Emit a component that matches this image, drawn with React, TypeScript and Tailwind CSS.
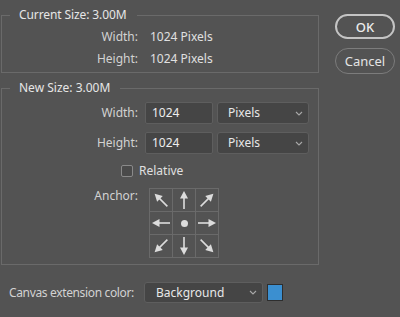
import React from "react"

const Chevron = () => (
    <svg width="8" height="5" viewBox="0 0 8 5" className="shrink-0">
        <path d="M1 1 L4 4 L7 1" fill="none" stroke="#a8a8a8" strokeWidth="1.1" />
    </svg>
)

const Arrow = ({ angle, short }: { angle: number; short?: boolean }) => (
    <svg width="22" height="22" viewBox="0 0 22 22">
        <g transform={`rotate(${angle} 11 11)`} fill="#dcdcdc">
            {short ? (
                <>
                    <polygon points="11,4 7,10.5 15,10.5" />
                    <rect x="10.2" y="9" width="1.6" height="10" />
                </>
            ) : (
                <>
                    <polygon points="11,2 7,9.5 15,9.5" />
                    <rect x="10.2" y="8" width="1.6" height="12" />
                </>
            )}
        </g>
    </svg>
)

const Select = ({ label, width }: { label: string; width: string }) => (
    <div className={`${width} h-[22px] flex items-center justify-between pl-[10px] pr-[5px] bg-[#454545] border border-[#5e5e5e] rounded-[3px] text-[#e8e8e8]`}>
        <span>{label}</span>
        <Chevron />
    </div>
)

export default function App() {
    const cells = [
        <Arrow angle={-45} />,
        <Arrow angle={0} />,
        <Arrow angle={45} />,
        <Arrow angle={-90} />,
        <span className="w-[7px] h-[7px] rounded-full bg-[#dcdcdc]" />,
        <Arrow angle={90} />,
        <Arrow angle={-135} />,
        <Arrow angle={180} />,
        <Arrow angle={135} />,
    ]

    return (
        <div className="w-[400px] h-[317px] bg-[#535353] text-[12px] leading-[16px] text-[#d2d2d2] flex pl-[1px]" style={{ fontFamily: '"Noto Sans", "Open Sans", sans-serif' }}>
            <div className="w-[318px] flex flex-col">
                <fieldset className="mt-[7px] border border-[#6a6a6a] pt-[3px] pb-[2px]">
                    <legend className="ml-[8px] pl-[9px] pr-[10px] text-[#e6e6e6] tracking-[-0.1px]">Current Size: 3.00M</legend>
                    <div className="flex h-[22px] items-center">
                        <span className="w-[136px] text-right">Width:</span>
                        <span className="ml-[12px] text-[#e0e0e0]">1024 Pixels</span>
                    </div>
                    <div className="flex h-[22px] items-center">
                        <span className="w-[136px] text-right">Height:</span>
                        <span className="ml-[12px] text-[#e0e0e0]">1024 Pixels</span>
                    </div>
                </fieldset>

                <fieldset className="mt-[7px] border border-[#6a6a6a] pt-[6px] pb-[6px] flex flex-col">
                    <legend className="ml-[8px] pl-[9px] pr-[10px] text-[#e6e6e6]">New Size: 3.00M</legend>
                    <div className="flex items-center">
                        <span className="w-[136px] text-right">Width:</span>
                        <div className="ml-[7px] w-[68px] h-[22px] flex items-center pl-[6px] bg-[#454545] border border-[#5e5e5e] rounded-[2px] text-[#eeeeee]">1024</div>
                        <div className="ml-[4px]"><Select label="Pixels" width="w-[92px]" /></div>
                    </div>
                    <div className="flex items-center mt-[8px]">
                        <span className="w-[136px] text-right">Height:</span>
                        <div className="ml-[7px] w-[68px] h-[22px] flex items-center pl-[6px] bg-[#454545] border border-[#5e5e5e] rounded-[2px] text-[#eeeeee]">1024</div>
                        <div className="ml-[4px]"><Select label="Pixels" width="w-[92px]" /></div>
                    </div>
                    <div className="flex items-center h-[22px] mt-[6px] pl-[119px]">
                        <span className="w-[12px] h-[12px] border border-[#8a8a8a] rounded-[2px] bg-[#4a4a4a]" />
                        <span className="ml-[6px] text-[#e0e0e0]">Relative</span>
                    </div>
                    <div className="flex items-start mt-[6px]">
                        <span className="w-[136px] text-right">Anchor:</span>
                        <div className="ml-[11px] w-[70px] h-[70px] grid grid-cols-3 gap-[1px] p-[1px] bg-[#6a6a6a]">
                            {cells.map((c, i) => (
                                <div key={i} className="bg-[#535353] flex items-center justify-center">{c}</div>
                            ))}
                        </div>
                    </div>
                </fieldset>

                <div className="flex items-center mt-[17px] pl-[8px]">
                    <span className="w-[130px] whitespace-nowrap tracking-[-0.35px]">Canvas extension color:</span>
                    <div className="ml-[5px]">
                        <div className="w-[119px] h-[21px] flex items-center justify-between pl-[11px] pr-[5px] bg-[#454545] border border-[#5e5e5e] rounded-[3px] text-[#e8e8e8]">
                            <span>Background</span>
                            <Chevron />
                        </div>
                    </div>
                    <span className="ml-[4px] w-[16px] h-[17px] bg-[#3b8fd0] border border-[#2e2e2e]" />
                </div>
            </div>

            <div className="ml-[16px] pt-[14px] flex flex-col gap-[9px]">
                <button className="w-[60px] h-[25px] rounded-full border-2 border-[#c4c4c4] text-[#ececec] text-[13px] font-medium">OK</button>
                <button className="w-[60px] h-[26px] rounded-full border-[1.5px] border-[#7c7c7c] text-[#e4e4e4] text-[13px]">Cancel</button>
            </div>
        </div>
    )
}
